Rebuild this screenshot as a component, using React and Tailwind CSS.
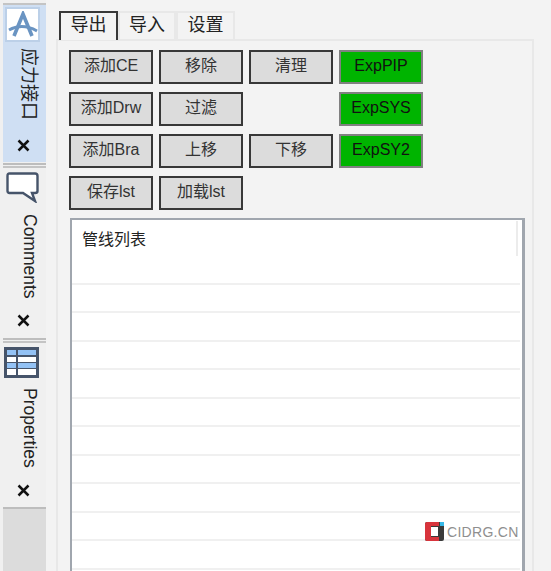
const FONT = "font-['Liberation_Sans','Noto_Sans_CJK_SC',sans-serif]";

function CloseMark() {
  return (
    <svg width="13" height="13" viewBox="0 0 13 13" className="block">
      <path d="M1.5 1.5 L11.5 11.5 M11.5 1.5 L1.5 11.5" stroke="#111" strokeWidth="2.5" />
    </svg>
  );
}

function SideTab({ icon, label, active, textGap, closeGap, height, textHeight, textSize }) {
  return (
    <div className={`flex flex-col items-start ${active ? "bg-[#cfdff3]" : "bg-[#f0f0f0]"} ${height}`}>
      {icon}
      <div className={`${textGap} ${textHeight} ${textSize} ml-[17px] text-[#222] leading-none [writing-mode:vertical-rl] [text-orientation:sideways] whitespace-nowrap`}>
        {label}
      </div>
      <div className={`${closeGap} ml-[14px]`}>
        <CloseMark />
      </div>
    </div>
  );
}

function Separator() {
  return (
    <div className="h-[7px] bg-[#f0f0f0] flex flex-col justify-between py-[1px]">
      <div className="h-[2px] bg-[#bdbdbd]" />
      <div className="h-[2px] bg-[#c4c4c4]" />
    </div>
  );
}

function PipeButton({ children, green }) {
  return (
    <button
      type="button"
      className={
        green
          ? "w-[84px] h-[34px] pb-[3px] bg-[#00b400] border-2 border-[#808080] text-[16px] text-[#111] leading-none"
          : "w-[84px] h-[34px] pb-[3px] bg-[#dcdcdc] border-2 border-[#383838] text-[16px] text-[#333] leading-none"
      }
    >
      {children}
    </button>
  );
}

function Tab({ children, active, width }) {
  return (
    <div
      className={
        active
          ? `${width} h-[29px] -mb-[1px] z-10 bg-[#f3f3f3] border-2 border-b-0 border-[#383838] text-[18px] text-[#222] text-center leading-[25px]`
          : `${width} h-[28px] border-2 border-b-0 border-[#e8e8e8] text-[18px] text-[#222] text-center leading-[25px]`
      }
    >
      {children}
    </div>
  );
}

const rows = [0, 1, 2, 3, 4, 5, 6, 7, 8, 9, 10];

export default function App() {
  return (
    <div className={`relative w-[551px] h-[571px] overflow-hidden flex bg-[#f3f3f3] ${FONT}`}>
      {/* left dock */}
      <div className="w-[46px] h-full pl-[3px] pt-[3px] bg-[#f0f0f0] flex flex-col shrink-0">
        <div className="h-[2px] bg-[#c4c4c4] shrink-0" />
        <SideTab
          active
          height="h-[157px]"
          label="应力接口"
          textSize="text-[18px]"
          textGap="mt-[6px]"
          textHeight="h-[76px]"
          closeGap="mt-[15px]"
          icon={
            <div className="mt-[2px] ml-[2px] w-[35px] h-[35px] bg-white border-2 border-[#bcd0e8] flex items-center justify-center">
              <svg width="30" height="28" viewBox="0 0 30 28">
                <path d="M6 25 L15 3 L24 25" fill="none" stroke="#6a94c2" strokeWidth="3.6" />
                <path d="M1 19 C10 14 20 15 29 20" fill="none" stroke="#6a94c2" strokeWidth="3" />
              </svg>
            </div>
          }
        />
        <Separator />
        <SideTab
          height="h-[168px]"
          label="Comments"
          textSize="text-[17.5px]"
          textGap="mt-[11px]"
          textHeight="h-[84px]"
          closeGap="mt-[16px]"
          icon={
            <svg width="33" height="31" viewBox="0 0 33 31" className="mt-[3px] ml-[3px]">
              <path
                d="M3.5 1.5 H29 Q31.5 1.5 31.5 4 V19 Q31.5 21 29 21 H26 L29 29 L17 21 H3.5 Q1.5 21 1.5 19 V4 Q1.5 1.5 3.5 1.5 Z"
                fill="#fff"
                stroke="#46546a"
                strokeWidth="2.4"
              />
            </svg>
          }
        />
        <Separator />
        <SideTab
          height="h-[163px]"
          label="Properties"
          textSize="text-[17.5px]"
          textGap="mt-[10px]"
          textHeight="h-[80px]"
          closeGap="mt-[16px]"
          icon={
            <svg width="35" height="31" viewBox="0 0 35 31" className="mt-[3px] ml-[1px]">
              <rect x="0" y="0" width="35" height="31" fill="#46546a" />
              <rect x="3" y="3" width="9" height="5" fill="#93c2f5" />
              <rect x="14" y="3" width="18" height="5" fill="#93c2f5" />
              <rect x="3" y="10" width="9" height="5" fill="#fff" />
              <rect x="14" y="10" width="18" height="5" fill="#fff" />
              <rect x="3" y="16" width="9" height="5" fill="#93c2f5" />
              <rect x="14" y="16" width="18" height="5" fill="#93c2f5" />
              <rect x="3" y="22" width="9" height="6" fill="#fff" />
              <rect x="14" y="22" width="18" height="6" fill="#fff" />
            </svg>
          }
        />
        <div className="h-[2px] bg-[#bdbdbd] shrink-0" />
        <div className="flex-1 bg-[#dcdcdc]" />
      </div>

      {/* main panel */}
      <div className="flex-1 min-w-0 pl-[10px] pt-[11px]">
        <div className="flex pl-[3px]">
          <Tab active width="w-[59px]">导出</Tab>
          <Tab width="w-[58px]">导入</Tab>
          <Tab width="w-[59px]">设置</Tab>
        </div>
        <div className="w-[478px] h-[600px] border-t-2 border-l-2 border-r-2 border-[#e8e8e8] pl-[11px] pt-[9px]">
          <div className="grid grid-cols-[84px_84px_84px_84px] auto-rows-[34px] gap-x-[6px] gap-y-[8px]">
            <PipeButton>添加CE</PipeButton>
            <PipeButton>移除</PipeButton>
            <PipeButton>清理</PipeButton>
            <PipeButton green>ExpPIP</PipeButton>
            <PipeButton>添加Drw</PipeButton>
            <PipeButton>过滤</PipeButton>
            <div />
            <PipeButton green>ExpSYS</PipeButton>
            <PipeButton>添加Bra</PipeButton>
            <PipeButton>上移</PipeButton>
            <PipeButton>下移</PipeButton>
            <PipeButton green>ExpSY2</PipeButton>
            <PipeButton>保存lst</PipeButton>
            <PipeButton>加载lst</PipeButton>
          </div>
          <div className="mt-[8px] ml-[1px] w-[455px] h-[400px] bg-white border-2 border-r-[3px] border-b-0 border-[#a0a6ae] pr-[2px]">
            <div className="h-[36px] flex">
              <div className="flex-1 pl-[10px] pt-[9px] text-[16px] leading-[22px] text-[#222]">管线列表</div>
              <div className="w-[2px] h-[35px] mt-[1px] bg-[#ececec]" />
              <div className="w-[2px]" />
            </div>
            {rows.map((row) => (
              <div key={row} className="h-[28.55px] border-b-2 border-[#f0f0f0]" />
            ))}
          </div>
        </div>
      </div>

      {/* watermark */}
      <div className="absolute left-[425px] top-[522px] flex items-center gap-[3px]">
        <svg width="19" height="19" viewBox="0 0 19 19">
          <rect x="0" y="0" width="19" height="19" rx="2" fill="#3a3a3a" />
          <path d="M2 0 H14 V4 H6 V15 H14 V19 H2 Q0 19 0 17 V2 Q0 0 2 0 Z" fill="#d8343c" />
          <rect x="6" y="5" width="7" height="9" fill="#fff" />
          <rect x="15" y="0" width="4" height="4" fill="#35b8e8" />
        </svg>
        <span className="text-[14px] leading-none tracking-[0.3px] text-[#8f8f8f]">CIDRG.CN</span>
      </div>
    </div>
  );
}
